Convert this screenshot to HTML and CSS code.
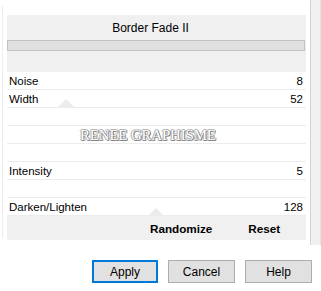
FILE: index.html
```html
<!DOCTYPE html>
<html>
<head>
<meta charset="utf-8">
<link rel="stylesheet" href="styles.css">
</head>
<body>
<div class="page">
  <div class="top">
    <div class="edge"></div>
    <div class="panel">
      <div class="header">
        <div class="title">Border Fade II</div>
        <div class="bar"></div>
      </div>
      <div class="rows">
        <div class="row"><span>Noise</span><span>8</span></div>
        <div class="row"><span>Width</span><span>52</span><i class="thumb t1"></i></div>
        <div class="row"></div>
        <div class="row mark"><span class="wm">RENEE GRAPHISME</span></div>
        <div class="row"></div>
        <div class="row"><span>Intensity</span><span>5</span></div>
        <div class="row"></div>
        <div class="row"><span>Darken/Lighten</span><span>128</span><i class="thumb t2"></i></div>
      </div>
      <div class="actions">
        <span class="rand">Randomize</span>
        <span class="reset">Reset</span>
      </div>
    </div>
    <div class="scroll"></div>
  </div>
  <div class="buttons">
    <button class="btn focus">Apply</button>
    <button class="btn">Cancel</button>
    <button class="btn">Help</button>
  </div>
</div>
</body>
</html>
```
FILE: styles.css
```css
html, body {
  margin: 0;
  padding: 0;
  background: #ffffff;
}
body {
  font-family: "Liberation Sans", Arial, sans-serif;
  font-size: 12px;
  color: #000;
  width: 321px;
  height: 291px;
  overflow: hidden;
}
.page {
  width: 321px;
  height: 291px;
}
.top {
  display: flex;
  height: 242px;
}
.edge {
  width: 7px;
  box-sizing: border-box;
  margin-top: 6px;
  border-left: 2px solid #fff;
  position: relative;
}
.edge::before {
  content: "";
  display: block;
  width: 1px;
  height: 232px;
  background: #ececec;
}
.panel {
  width: 299px;
  margin-top: 15px;
  display: flex;
  flex-direction: column;
}
.header {
  background: #f0f0f0;
  height: 57px;
  box-sizing: border-box;
  padding-top: 6px;
}
.title {
  text-align: center;
  line-height: 14px;
  height: 14px;
  padding-right: 12px;
}
.bar {
  margin-top: 5px;
  height: 11px;
  box-sizing: border-box;
  border: 1px solid #c2c2c2;
  background: #e0e0e0;
  margin-right: 1px;
}
.rows {
  background: #fff;
}
.row {
  position: relative;
  height: 17px;
  border-bottom: 1px solid #ececec;
  display: flex;
  justify-content: space-between;
  align-items: center;
  padding: 0 3px 0 2px;
  line-height: 14px;
  font-size: 11.5px;
}
.row.mark {
  justify-content: flex-start;
  padding-left: 73px;
}
.wm {
  font-family: "Liberation Serif", "Times New Roman", serif;
  font-size: 15px;
  color: #ffffff;
  letter-spacing: -0.2px;
  text-shadow: 1px 0 0 #888, -1px 0 0 #aaa, 0 1px 0 #888, 0 -1px 0 #b0b0b0, 1px 1px 0 #8c8c8c;
}
.thumb {
  position: absolute;
  width: 0;
  height: 0;
  border-left: 8px solid transparent;
  border-right: 8px solid transparent;
  border-bottom: 8px solid #ececec;
}
.t1 { left: 51px; top: 9px; }
.t2 { left: 141px; top: 10px; }
.actions {
  background: #f0f0f0;
  height: 24px;
  position: relative;
  display: flex;
  align-items: center;
  font-weight: bold;
  font-size: 11.7px;
}
.rand { margin-left: 143px; }
.reset { margin-left: 36px; }
.scroll {
  margin-left: 4px;
  width: 11px;
  height: 245px;
  box-sizing: border-box;
  border-left: 1px solid #d4d4d4;
  border-right: 1px solid #e2e2e2;
  background: #f0f0f0;
}
.buttons {
  display: flex;
  padding-left: 92px;
  padding-top: 18px;
  gap: 10px;
}
.btn {
  font-family: "Liberation Sans", Arial, sans-serif;
  font-size: 12px;
  width: 67px;
  height: 23px;
  box-sizing: border-box;
  background: #e1e1e1;
  border: 1px solid #adadad;
  color: #000;
  padding: 0;
  margin: 0;
}
.btn.focus {
  width: 66px;
  border: 2px solid #0078d7;
}
```
